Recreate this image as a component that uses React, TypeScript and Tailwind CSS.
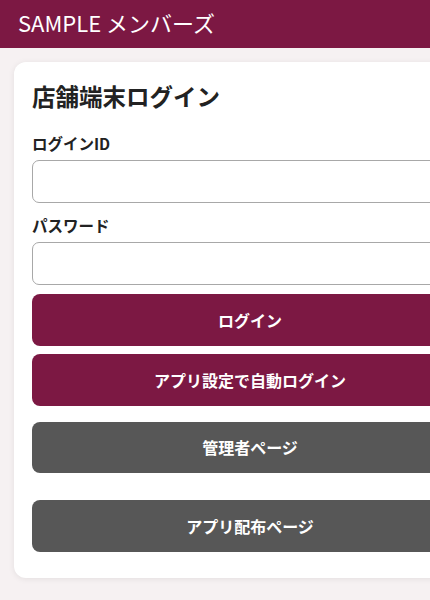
import { useState } from "react";

const font = { fontFamily: '"Noto Sans CJK JP", "Noto Sans", sans-serif' };

function Field({ label, type }: { label: string; type: string }) {
  const [value, setValue] = useState("");
  return (
    <div className="flex flex-col">
      <label className="text-[15.5px] font-bold leading-[22px] text-[#222]">{label}</label>
      <input
        type={type}
        value={value}
        onChange={(e) => setValue(e.target.value)}
        className="mt-[6px] h-[43px] w-full rounded-[7px] border border-[#a8a8a8] bg-white px-3 text-[15px] outline-none"
      />
    </div>
  );
}

export default function App() {
  return (
    <div className="min-h-[600px] min-w-[500px] bg-[#f6f1f2]" style={font}>
      <header className="flex h-12 items-center bg-[#7c1843] px-[18px] pb-[3px]">
        <h1 className="text-[22px] font-normal text-white">SAMPLE メンバーズ</h1>
      </header>

      <main className="px-[14px] pt-[14px] pb-[22px]">
        <div className="rounded-[12px] bg-white px-[18px] pt-[18px] pb-[26px] shadow-[0_1px_6px_rgba(0,0,0,0.08)]">
          <h2 className="text-[23.5px] font-bold leading-[33px] text-[#222]">店舗端末ログイン</h2>

          <div className="mt-[19px] flex flex-col gap-[11px]">
            <Field label="ログインID" type="text" />
            <Field label="パスワード" type="password" />
          </div>

          <div className="mt-[9px] flex flex-col">
            <button className="h-[51.5px] w-full rounded-[8px] bg-[#7c1843] text-[16px] font-bold text-white">
              ログイン
            </button>
            <button className="mt-[8.5px] h-[51.5px] w-full rounded-[8px] bg-[#7c1843] text-[16px] font-bold text-white">
              アプリ設定で自動ログイン
            </button>
            <button className="mt-[16px] h-[51.5px] w-full rounded-[8px] bg-[#575757] text-[16px] font-bold text-white">
              管理者ページ
            </button>
            <button className="mt-[27px] h-[51.5px] w-full rounded-[8px] bg-[#575757] text-[16px] font-bold text-white">
              アプリ配布ページ
            </button>
          </div>
        </div>
      </main>
    </div>
  );
}
